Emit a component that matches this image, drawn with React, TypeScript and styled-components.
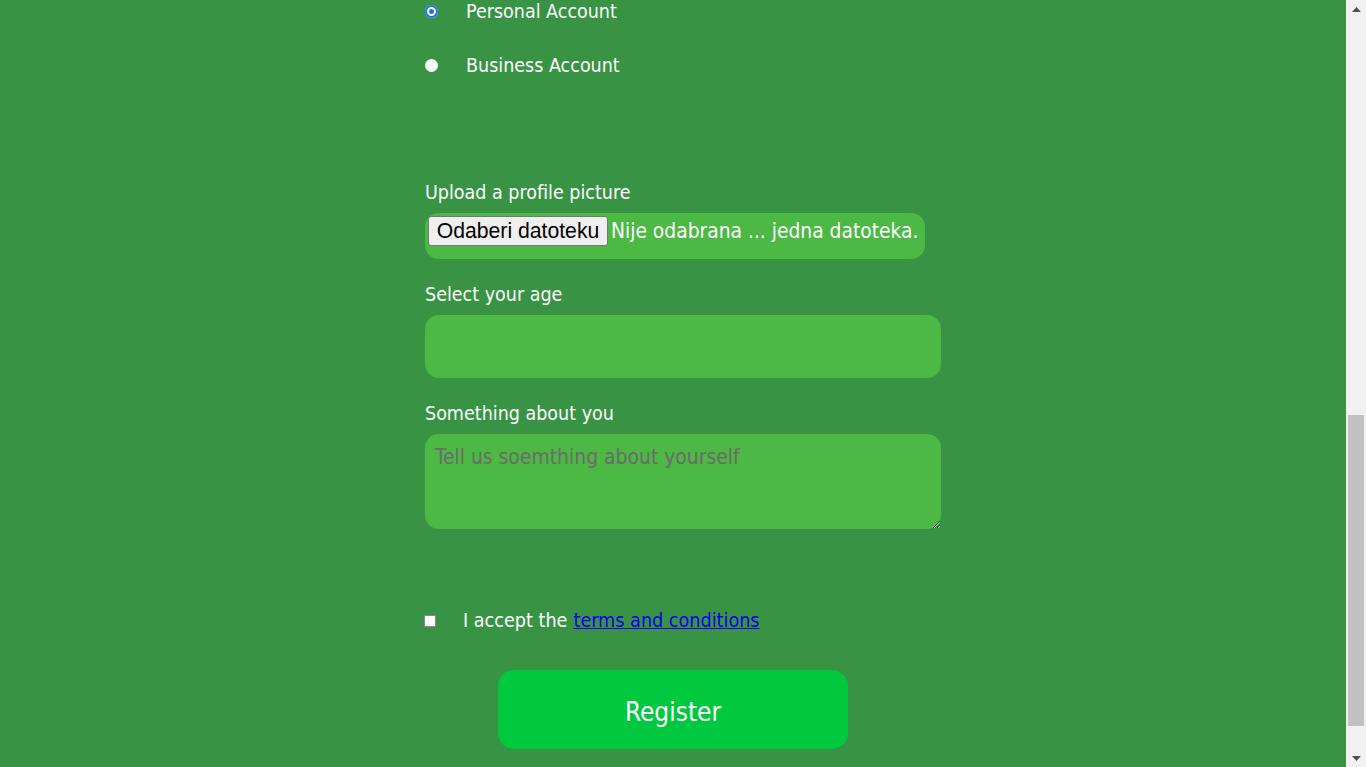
import React from "react";
import styled, { createGlobalStyle } from "styled-components";

const Global = createGlobalStyle`
  html, body { margin: 0; padding: 0; height: 100%; overflow: hidden; }
  body { background: #389444; font-family: "DejaVu Sans", Verdana, sans-serif; }
  * { box-sizing: border-box; }
`;

const Shell = styled.div`
  display: flex;
  height: 767px;
  width: 1366px;
`;

const Page = styled.main`
  flex: 1;
  display: flex;
  flex-direction: column;
  padding-left: 425px;
  color: #fff;
  font-family: "DejaVu Sans Condensed", "DejaVu Sans", sans-serif;
  font-stretch: condensed;
`;

const Form = styled.form`
  width: 516px;
  display: flex;
  flex-direction: column;
`;

const RadioGroup = styled.div`
  display: flex;
  flex-direction: column;
  gap: 32px;
  margin-bottom: 105px;
`;

const RadioRow = styled.label`
  display: flex;
  align-items: center;
  height: 22px;
  font-size: 19.5px;
`;

const RadioDot = styled.span<{ $checked?: boolean }>`
  width: 13px;
  height: 13px;
  border-radius: 50%;
  margin-right: 28px;
  background: ${(p) => (p.$checked ? "#1a73e8" : "#fff")};
  box-shadow: ${(p) => (p.$checked ? "inset 0 0 0 2px #1a73e8, inset 0 0 0 4px #fff" : "none")};
`;

const Label = styled.div`
  height: 24px;
  line-height: 24px;
  font-size: 19.5px;
  margin-bottom: 8px;
`;

const FileBox = styled.div`
  width: 500px;
  height: 46px;
  background: #4cb944;
  border-radius: 14px;
  display: flex;
  align-items: flex-start;
  padding: 3px 0 0 3px;
  margin-bottom: 24px;
  font-size: 20.8px;
  white-space: nowrap;
`;

const FileButton = styled.button`
  font-family: "Liberation Sans", Arial, sans-serif;
  font-size: 21.2px;
  height: 30px;
  width: 180px;
  padding: 0;
  margin-right: 3px;
  background: #efefef;
  color: #000;
  border: 1px solid #767676;
  border-radius: 3px;
`;

const FileName = styled.span`
  line-height: 30px;
`;

const Select = styled.select`
  width: 516px;
  height: 63px;
  background: #4cb944;
  border: none;
  border-radius: 14px;
  appearance: none;
  margin-bottom: 24px;
  outline: none;
`;

const TextArea = styled.textarea`
  width: 516px;
  height: 95px;
  background: #4cb944;
  border: none;
  border-radius: 14px;
  padding: 11px 10px;
  font-family: "DejaVu Sans Condensed", "DejaVu Sans", sans-serif;
  font-stretch: condensed;
  font-size: 20.9px;
  color: #fff;
  outline: none;
  margin: 0 0 79px 0;
  display: block;
  &::placeholder { color: #6b6b6b; }
`;

const CheckRow = styled.label`
  display: flex;
  align-items: center;
  height: 24px;
  font-size: 19.6px;
  margin-left: -1px;
  margin-bottom: 38px;
`;

const CheckBox = styled.span`
  width: 12px;
  height: 12px;
  background: #fff;
  border: 1px solid #8a8a8a;
  border-radius: 1px;
  margin-right: 27px;
  margin-top: 2px;
`;

const Link = styled.a`
  color: #0000ee;
  text-decoration: underline;
  margin-left: 6px;
`;

const Register = styled.button`
  width: 350px;
  height: 79px;
  margin-left: 73px;
  padding: 5px 0 0 0;
  background: #00c83f;
  color: #fff;
  border: none;
  border-radius: 16px;
  font-family: "DejaVu Sans Condensed", "DejaVu Sans", sans-serif;
  font-stretch: condensed;
  font-size: 26px;
`;

const Scrollbar = styled.div`
  width: 20px;
  background: #f1f1f1;
  display: flex;
  flex-direction: column;
  align-items: center;
  padding: 7px 2px 6px 2px;
`;

const Arrow = styled.svg`
  width: 9px;
  height: 5px;
  flex: none;
`;

const Track = styled.div`
  flex: 1;
  width: 100%;
  display: flex;
  flex-direction: column;
  justify-content: flex-end;
  padding: 0 0 30px 0;
`;

const Thumb = styled.div`
  height: 311px;
  width: 16px;
  background: #c1c1c1;
`;

export default function App() {
  return (
    <>
      <Global />
      <Shell>
        <Page>
          <Form onSubmit={(e) => e.preventDefault()}>
            <RadioGroup>
              <RadioRow>
                <RadioDot $checked />
                Personal Account
              </RadioRow>
              <RadioRow>
                <RadioDot />
                Business Account
              </RadioRow>
            </RadioGroup>
            <Label>Upload a profile picture</Label>
            <FileBox>
              <FileButton type="button">Odaberi datoteku</FileButton>
              <FileName>Nije odabrana ... jedna datoteka.</FileName>
            </FileBox>
            <Label>Select your age</Label>
            <Select defaultValue="">
              <option value="" hidden></option>
            </Select>
            <Label>Something about you</Label>
            <TextArea placeholder="Tell us soemthing about yourself" />
            <CheckRow>
              <CheckBox />
              I accept the<Link href="#">terms and conditions</Link>
            </CheckRow>
            <Register type="submit">Register</Register>
          </Form>
        </Page>
        <Scrollbar>
          <Arrow viewBox="0 0 9 5"><path d="M4.5 0L9 5H0Z" fill="#505050" /></Arrow>
          <Track>
            <Thumb />
          </Track>
          <Arrow viewBox="0 0 9 5"><path d="M0 0H9L4.5 5Z" fill="#505050" /></Arrow>
        </Scrollbar>
      </Shell>
    </>
  );
}
